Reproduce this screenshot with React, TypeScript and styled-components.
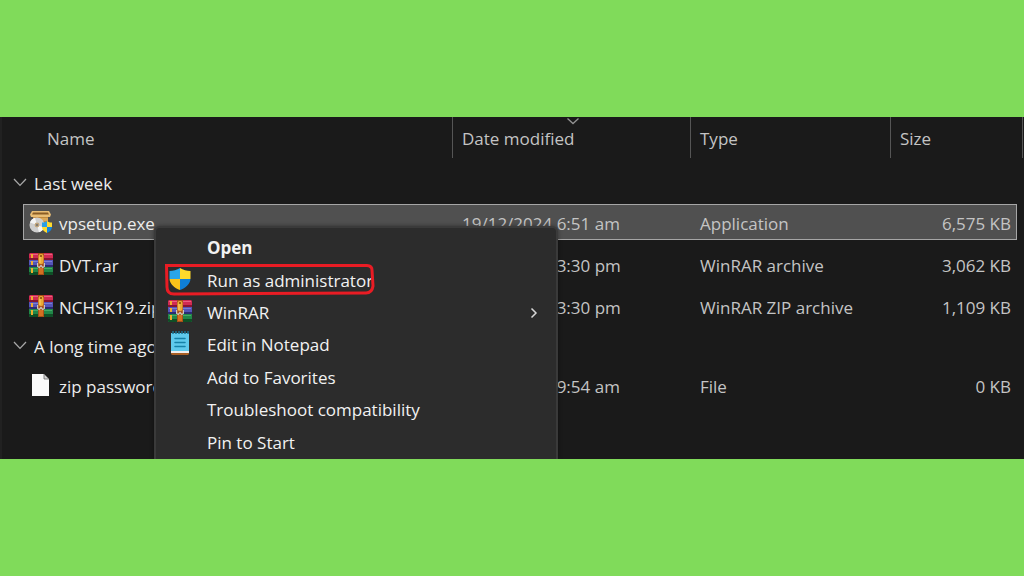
import React from 'react';
import styled, { createGlobalStyle } from 'styled-components';

const GlobalStyle = createGlobalStyle`
  * { box-sizing: border-box; }
  body {
    margin: 0;
    background: #80db5a;
    font-family: "Open Sans", "Noto Sans", sans-serif;
    font-size: 17px;
    line-height: 24px;
  }
`;

const Page = styled.main`
  min-height: 100vh;
  display: flex;
  flex-direction: column;
  justify-content: center;
`;

const Explorer = styled.section`
  position: relative;
  overflow: hidden;
  background: #1a1a1a;
  border-left: 2px solid #212121;
  padding-bottom: 51px;
`;

const FileTable = styled.table`
  display: block;
  white-space: nowrap;
  color: #c4c4c4;

  thead, tbody { display: block; }
`;

const HeaderRow = styled.tr`
  display: grid;
  grid-template-columns: minmax(0, 1fr) 238px 200px 133px;
  height: 41px;
  padding-right: 1px;
`;

const HeaderCell = styled.th<{ $indent?: boolean }>`
  position: relative;
  padding: 10px 0 0 ${(p) => (p.$indent ? 45 : 9)}px;
  border-left: ${(p) => (p.$indent ? 0 : 1)}px solid #555;
  font-weight: 400;
  text-align: left;

  &:last-child { border-right: 1px solid #555; }
`;

const SortMark = styled.svg`
  position: absolute;
  top: 0;
  left: 50%;
  margin-left: -6px;
`;

const GroupRow = styled.tr<{ $first?: boolean }>`
  display: block;
  padding: ${(p) => (p.$first ? '14px 0 8px' : '6px 0 7px')};
`;

const GroupCell = styled.th`
  display: block;
  padding: 0 0 0 11px;
  font-weight: 400;
  text-align: left;
`;

const GroupToggle = styled.button`
  display: flex;
  align-items: center;
  gap: 7px;
  padding: 0;
  border: 0;
  background: none;
  color: #ececec;
  font: inherit;

  svg { margin-bottom: 4px; }
`;

const FileRow = styled.tr<{ $selected?: boolean }>`
  display: grid;
  grid-template-columns: minmax(0, 1fr) 238px 200px 127px;
  align-items: center;
  height: ${(p) => (p.$selected ? 36 : 42)}px;
  margin: 0 7px ${(p) => (p.$selected ? 5 : 0)}px 21px;
  padding-top: ${(p) => (p.$selected ? 3 : 0)}px;
  background: ${(p) => (p.$selected ? '#505050' : 'transparent')};
  box-shadow: ${(p) => (p.$selected ? 'inset 0 0 0 1px #a6a6a6' : 'none')};
`;

const Cell = styled.td<{ $end?: boolean }>`
  padding: ${(p) => (p.$end ? '0 6px 0 0' : '0 0 0 10px')};
  text-align: ${(p) => (p.$end ? 'right' : 'left')};
`;

const NameCell = styled.td`
  display: flex;
  align-items: center;
  gap: 6px;
  padding: 0 0 0 6px;
  color: #ececec;

  svg { flex: none; margin-bottom: 4px; }
`;

const Menu = styled.ul`
  position: absolute;
  top: 109px;
  bottom: 0;
  left: 152px;
  width: 404px;
  margin: 0;
  padding: 4px 0 0;
  display: flex;
  flex-direction: column;
  list-style: none;
  background: #2c2c2c;
  border: 2px solid #3a3a3a;
  border-bottom: 0;
  border-radius: 6px 6px 0 0;
  box-shadow: 0 0 4px #00000066;
`;

const MenuItem = styled.li`
  position: relative;
  flex: 1;
  display: flex;
`;

const MenuButton = styled.button<{ $strong?: boolean }>`
  flex: 1;
  display: grid;
  grid-template-columns: 24px 1fr 10px;
  align-items: center;
  column-gap: 15px;
  padding: 0 17px 0 12px;
  border: 0;
  background: none;
  color: #f2f2f2;
  font: inherit;
  font-weight: ${(p) => (p.$strong ? 700 : 400)};
  text-align: left;
`;

const IconSlot = styled.span`
  display: grid;
  place-items: center;
  padding-bottom: 4px;
`;

const Highlight = styled.svg`
  position: absolute;
  top: -1px;
  left: 8px;
  pointer-events: none;
`;

const Chevron = () => (
  <svg width="14" height="14" viewBox="0 0 14 14" fill="none" stroke="#a8a8a8" strokeWidth="1.3" aria-hidden="true">
    <path d="M1 4l6 6.400L13 4" />
  </svg>
);

const SHIELD = 'M12 1C9 3 5 4 1.5 4v7.5c0 5.500 5 9.500 10.500 11.500 5.500-2 10.500-6 10.500-11.500V4C19 4 15 3 12 1z';

const Shield = () => (
  <svg width="24" height="24" viewBox="0 0 24 24" aria-hidden="true">
    <clipPath id="shield"><path d={SHIELD} /></clipPath>
    <g clipPath="url(#shield)">
      <path fill="#2aa5e8" d="M0 0h12v12H0z" />
      <path fill="#ffd92b" d="M12 0h12v12H12z" />
      <path fill="#fbc21a" d="M0 12h12v12H0z" />
      <path fill="#0f7fd6" d="M12 12h12v12H12z" />
    </g>
  </svg>
);

const SetupIcon = () => (
  <svg width="24" height="22" viewBox="0 0 24 22" aria-hidden="true">
    <path fill="#c28a3c" d="M4 4h15v12H4z" />
    <path fill="#dba757" d="M4 7h15v3H4z" />
    <path fill="#e9bd74" d="M3 0h17l2 3.500-1 2.500H2L1 3.500z" />
    <path fill="#8a5c25" d="M4 1.500h15l1 2H3z" />
    <circle cx="8" cy="14" r="7.500" fill="#cfcfcf" />
    <path fill="#f4f4f4" d="M8 14L1 11.500A7.500 7.500 0 0 1 6 6.800zM8 14l7 2.500a7.500 7.500 0 0 1-5 4.700z" />
    <circle cx="8" cy="14" r="2.400" fill="#c0a47c" />
    <circle cx="8" cy="14" r="1" fill="#707070" />
    <clipPath id="badge"><path d="M18 10c-1.500 1-3 1.500-5 1.500V16c0 3 2.500 5 5 6 2.500-1 5-3 5-6v-4.500c-2 0-3.500-.5-5-1.500z" /></clipPath>
    <g clipPath="url(#badge)">
      <path fill="#2a9fe5" d="M12 9h6v7h-6z" />
      <path fill="#ffda2e" d="M18 9h6v7h-6zM12 16h6v6h-6z" />
      <path fill="#1584db" d="M18 16h6v6h-6z" />
    </g>
  </svg>
);

const ArchiveIcon = () => (
  <svg width="24" height="22" viewBox="0 0 24 22" aria-hidden="true">
    <path fill="#d12a52" d="M1 0h22l1 1v6H0V1z" />
    <path fill="#e85f80" d="M1 1h22v1H1z" />
    <path fill="#861533" d="M0 5h24v2H0z" />
    <path fill="#5454b8" d="M0 7h24v7H0z" />
    <path fill="#7c7cd2" d="M1 8h22v1H1z" />
    <path fill="#2c2c72" d="M0 12h24v2H0z" />
    <path fill="#218748" d="M0 14h24v7l-1 1H1l-1-1z" />
    <path fill="#45a868" d="M1 15h22v1H1z" />
    <path fill="#0f4f26" d="M0 19h24v2l-1 1H1l-1-1z" />
    <path fill="#efad2e" d="M2 1h2v4H2zM2 8h2v4H2zM2 15h2v5H2z" />
    <path fill="#a94f18" d="M9 0h6v22H9z" />
    <path fill="#d27022" d="M10 15h4v6h-4z" />
    <rect x="9.500" y="1" width="5" height="10" rx="2" fill="#eba936" />
    <path fill="#fbd465" d="M10.500 4h1v6h-1z" />
    <path fill="#9c5d16" d="M11 2h2v2h-2z" />
    <path fill="none" stroke="#c9c4be" strokeWidth="1.200" d="M8.600 10v3.500l1.700 1L12 12.500l1.700 2 1.700-1V10" />
  </svg>
);

const NotepadIcon = () => (
  <svg width="20" height="24" viewBox="0 0 20 24" aria-hidden="true">
    <path fill="#a95f24" d="M1 20h18v3l-1 1H2l-1-1z" />
    <path fill="#efefef" d="M1 19h18v3H1z" />
    <path fill="#5fcaec" d="M1 2h18v18H1z" />
    <path stroke="#1b718f" strokeWidth="1.500" d="M3 0v3M6 0v3M9 0v3M12 0v3M15 0v3M18 0v3" />
    <path stroke="#1682a8" strokeWidth="1.500" strokeLinecap="round" d="M5 7.500h10M5 11.500h10M5 15.500h10" />
  </svg>
);

const BlankFileIcon = () => (
  <svg width="24" height="22" viewBox="0 0 24 22" aria-hidden="true">
    <path fill="#fafafa" d="M3 0h12l5 5v17H3z" />
    <path fill="#d4d4d4" stroke="#666" strokeWidth=".8" d="M15 0v5h5z" />
  </svg>
);

interface FileEntry {
  name: string;
  icon: React.ReactNode;
  date: string;
  type: string;
  size: string;
  selected?: boolean;
}

const groups: { label: string; files: FileEntry[] }[] = [
  {
    label: 'Last week',
    files: [
      { name: 'vpsetup.exe', icon: <SetupIcon />, date: '19/12/2024 6:51 am', type: 'Application', size: '6,575 KB', selected: true },
      { name: 'DVT.rar', icon: <ArchiveIcon />, date: '19/12/2024 3:30 pm', type: 'WinRAR archive', size: '3,062 KB' },
      { name: 'NCHSK19.zip', icon: <ArchiveIcon />, date: '19/12/2024 3:30 pm', type: 'WinRAR ZIP archive', size: '1,109 KB' },
    ],
  },
  {
    label: 'A long time ago',
    files: [
      { name: 'zip password', icon: <BlankFileIcon />, date: '19/12/2023 9:54 am', type: 'File', size: '0 KB' },
    ],
  },
];

const actions: { label: string; icon?: React.ReactNode; strong?: boolean; marked?: boolean; submenu?: boolean }[] = [
  { label: 'Open', strong: true },
  { label: 'Run as administrator', icon: <Shield />, marked: true },
  { label: 'WinRAR', icon: <ArchiveIcon />, submenu: true },
  { label: 'Edit in Notepad', icon: <NotepadIcon /> },
  { label: 'Add to Favorites' },
  { label: 'Troubleshoot compatibility' },
  { label: 'Pin to Start' },
];

export default function App() {
  return (
    <Page>
      <GlobalStyle />
      <Explorer>
        <FileTable>
          <thead>
            <HeaderRow>
              <HeaderCell $indent>Name</HeaderCell>
              <HeaderCell>
                Date modified
                <SortMark width="14" height="8" viewBox="0 0 14 8" fill="none" stroke="#929292" strokeWidth="1.300" aria-hidden="true">
                  <path d="M1.500 1.500L7 6.500l5.500-5" />
                </SortMark>
              </HeaderCell>
              <HeaderCell>Type</HeaderCell>
              <HeaderCell>Size</HeaderCell>
            </HeaderRow>
          </thead>
          {groups.map((group, index) => (
            <tbody key={group.label}>
              <GroupRow $first={index === 0}>
                <GroupCell colSpan={4}>
                  <GroupToggle><Chevron />{group.label}</GroupToggle>
                </GroupCell>
              </GroupRow>
              {group.files.map((file) => (
                <FileRow key={file.name} $selected={file.selected}>
                  <NameCell>{file.icon}{file.name}</NameCell>
                  <Cell>{file.date}</Cell>
                  <Cell>{file.type}</Cell>
                  <Cell $end>{file.size}</Cell>
                </FileRow>
              ))}
            </tbody>
          ))}
        </FileTable>
        <Menu>
          {actions.map((action) => (
            <MenuItem key={action.label}>
              <MenuButton $strong={action.strong}>
                <IconSlot>{action.icon}</IconSlot>
                <span>{action.label}</span>
                {action.submenu && (
                  <svg width="10" height="12" viewBox="0 0 10 12" fill="none" stroke="#d8d8d8" strokeWidth="1.500" aria-hidden="true">
                    <path d="M2.500 1.500L7 6l-4.500 4.500" />
                  </svg>
                )}
              </MenuButton>
              {action.marked && (
                <Highlight width="211" height="33" viewBox="0 0 211 33" fill="none" stroke="#e91c24" strokeWidth="3" aria-hidden="true">
                  <path d="M2.500 2.500H203Q208 3 208 7L209 23Q208 30 202 30L10 31Q3 31 3 24Z" />
                </Highlight>
              )}
            </MenuItem>
          ))}
        </Menu>
      </Explorer>
    </Page>
  );
}
